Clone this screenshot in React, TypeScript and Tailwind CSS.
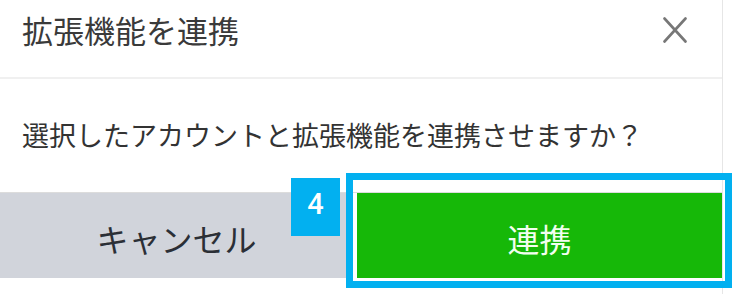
import React from "react";

export default function App() {
  const font = { fontFamily: '"Noto Sans CJK JP", "Noto Sans", sans-serif' };
  return (
    <div className="relative w-[745px] h-[294px] bg-white overflow-hidden" style={font}>
      <div className="w-[723px] h-full border-r border-[#e6e6e6] flex flex-col">
        <div className="h-[77px] flex items-start justify-between pl-[22px] pr-[35px] shrink-0">
          <span className="mt-[14px] text-[31px] leading-none text-[#3a3a3a]">拡張機能を連携</span>
          <svg className="mt-[17px]" width="24" height="26" viewBox="0 0 24 26" fill="none">
            <path d="M1.5 1.5 L22.5 24.5 M22.5 1.5 L1.5 24.5" stroke="#777777" strokeWidth="2.6" strokeLinecap="round" />
          </svg>
        </div>
        <div className="h-[2px] bg-[#f0f0f0] shrink-0" />
        <div className="h-[113px] pl-[22px] pt-[42px] shrink-0">
          <span className="text-[27px] leading-none text-[#333333] whitespace-nowrap">
            選択したアカウントと拡張機能を連携させますか？
          </span>
        </div>
        <div className="h-[86px] border-t border-[#dcdcdc] flex shrink-0">
          <div className="w-[353px] bg-[#d1d4db] flex items-center justify-center pt-[4px]">
            <span className="text-[32px] leading-none text-[#2b2f36]">キャンセル</span>
          </div>
          <div className="w-[4px] bg-white" />
          <div className="flex-1 bg-[#16b808] flex items-center justify-center pt-[4px]">
            <span className="text-[32px] leading-none text-[#f2fff0]">連携</span>
          </div>
        </div>
      </div>
      <div className="absolute left-[346px] top-[173px] w-[386px] h-[115px] border-[7px] border-[#02b0f0]" />
      <div
        className="absolute left-[291px] top-[178px] w-[49px] h-[58px] bg-[#02b0f0] flex items-center justify-center pb-[6px]"
        style={{ fontFamily: 'Roboto, "Liberation Sans", sans-serif' }}
      >
        <span className="text-[29px] leading-none font-medium text-white">4</span>
      </div>
    </div>
  );
}
